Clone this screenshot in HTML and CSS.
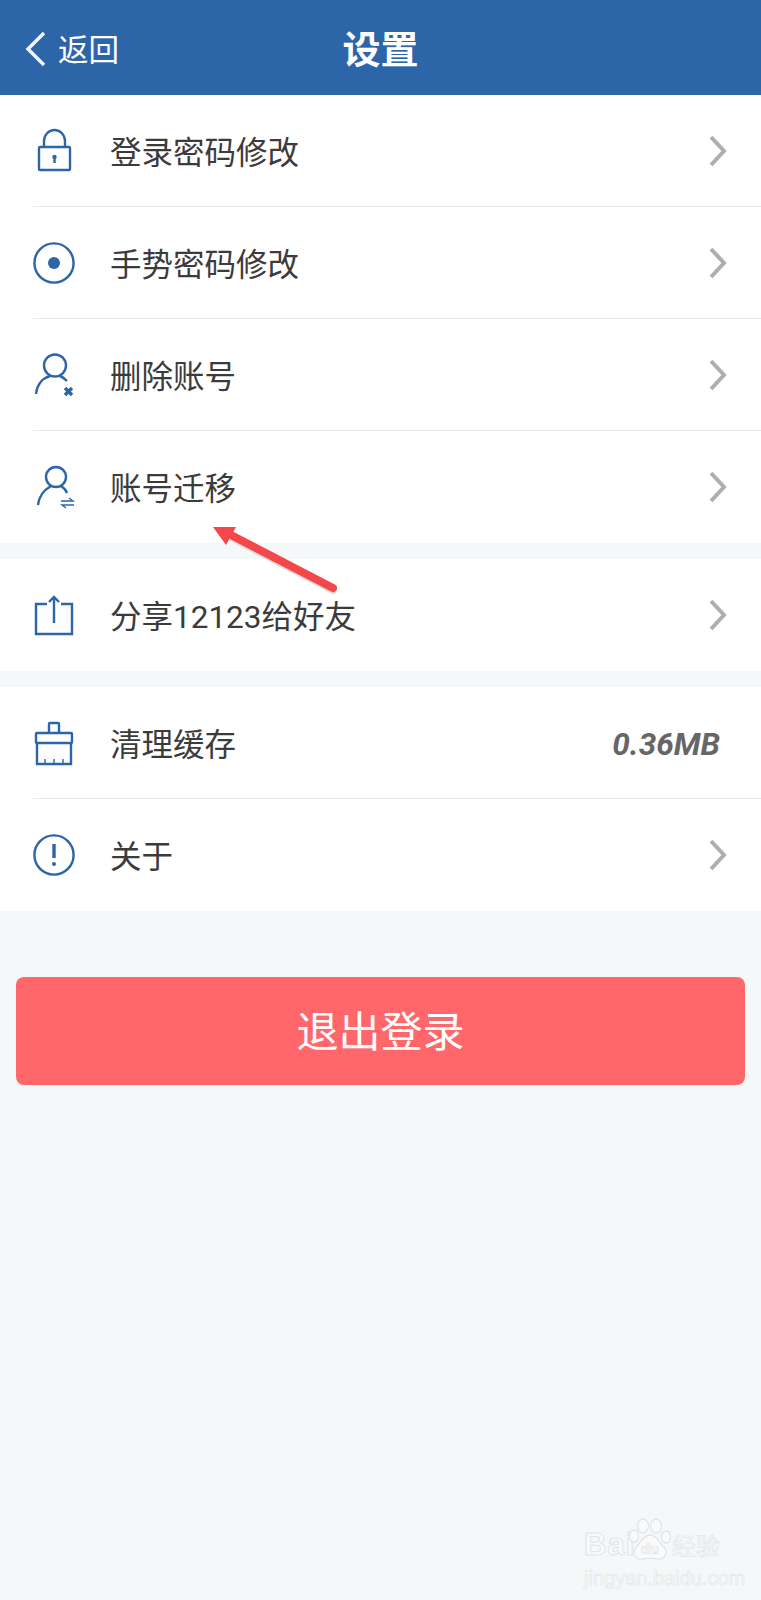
FILE: index.html
```html
<!DOCTYPE html>
<html>
<head>
    <meta http-equiv="Content-Type" content="text/html; charset=UTF-8">
    <title>设置</title>
    <link rel="stylesheet" href="styles.css">
</head>
<body>
<div class="page">
    <div class="topbar">
        <a class="back" href="#">
            <svg class="back-icon" width="24" height="38" viewBox="0 0 24 38"><path d="M21 3 L5 19 L21 35"/></svg>
            <span>返回</span>
        </a>
        <div class="title">设置</div>
    </div>

    <ul class="group">
        <li class="row">
            <svg class="ico" viewBox="0 0 48 48"><rect x="9" y="20" width="31" height="23" rx="1"/><path d="M14 20 V14 A10.5 11 0 0 1 35 14 V20"/><circle class="solid" cx="24.5" cy="30" r="2.2"/><path d="M24.5 30 V36"/></svg>
            <span class="label">登录密码修改</span>
            <svg class="arrow" viewBox="0 0 20 34"><path d="M3 3 L16 17 L3 31"/></svg>
        </li>
        <li class="row">
            <svg class="ico" viewBox="0 0 48 48"><circle cx="24" cy="24" r="19.6"/><circle class="solid" cx="24" cy="24" r="6"/></svg>
            <span class="label">手势密码修改</span>
            <svg class="arrow" viewBox="0 0 20 34"><path d="M3 3 L16 17 L3 31"/></svg>
        </li>
        <li class="row">
            <svg class="ico" viewBox="0 0 48 48"><circle cx="25" cy="14.5" r="11"/><path d="M6 43 C7 33 13 27 20 25 M30 25 C33 26 35 28 37 30"/><path class="thick" d="M35 37 L42 44 M42 37 L35 44"/></svg>
            <span class="label">删除账号</span>
            <svg class="arrow" viewBox="0 0 20 34"><path d="M3 3 L16 17 L3 31"/></svg>
        </li>
        <li class="row">
            <svg class="ico" viewBox="0 0 48 48"><circle cx="26" cy="14" r="10"/><path d="M8 42 C9 33 14 27 21 23 M31 23 C34 25 36 27 37 30"/><path class="thin" d="M31 38 H43 L39 35 M44 42 H32 L36 45"/></svg>
            <span class="label">账号迁移</span>
            <svg class="arrow" viewBox="0 0 20 34"><path d="M3 3 L16 17 L3 31"/></svg>
        </li>
    </ul>

    <ul class="group">
        <li class="row">
            <svg class="ico" viewBox="0 0 48 48"><path d="M17 13 H6 V43 H42 V13 H31"/><path d="M24 32 V7 M19 11 L24 6 L29 11"/></svg>
            <span class="label">分享12123给好友</span>
            <svg class="arrow" viewBox="0 0 20 34"><path d="M3 3 L16 17 L3 31"/></svg>
        </li>
    </ul>

    <ul class="group">
        <li class="row">
            <svg class="ico" viewBox="0 0 48 48"><path d="M19 14 V5 Q19 4 20 4 H28 Q29 4 29 5 V14"/><rect x="6" y="14" width="36" height="10" rx="1"/><path d="M7 24 V45 H41 V24"/><path class="thin" d="M15 45 V40 M24 45 V40 M33 45 V40"/></svg>
            <span class="label">清理缓存</span>
            <span class="value">0.36MB</span>
        </li>
        <li class="row">
            <svg class="ico" viewBox="0 0 48 48"><circle cx="24" cy="24" r="19.6"/><path class="thick" d="M24 13 V27"/><circle class="solid" cx="24" cy="33" r="2"/></svg>
            <span class="label">关于</span>
            <svg class="arrow" viewBox="0 0 20 34"><path d="M3 3 L16 17 L3 31"/></svg>
        </li>
    </ul>

    <a class="logout" href="#">退出登录</a>

    <!-- 红色箭头标注 -->
    <svg class="callout" width="140" height="80" viewBox="0 0 140 80">
        <path class="callout-shadow" d="M126 65 L24 12"/>
        <path class="callout-line" d="M126 63 L24 10"/>
        <path class="callout-head" d="M6 2 L29 2 L19 20 Z"/>
    </svg>

    <!-- 水印 -->
    <div class="mark">
        <div class="mark-top">
            <span class="mark-bai">Bai</span>
            <svg class="mark-paw" width="42" height="44" viewBox="0 0 42 44">
                <ellipse cx="14" cy="8" rx="5.5" ry="7"/>
                <ellipse cx="27" cy="8" rx="5.5" ry="7"/>
                <ellipse cx="5" cy="18" rx="4.5" ry="6"/>
                <ellipse cx="37" cy="19" rx="4.5" ry="6"/>
                <path d="M21 17 C28 17 30 25 35 29 C40 35 35 42 28 41 C24 40 18 40 14 41 C7 42 2 36 7 29 C12 25 14 17 21 17 Z"/>
                <text class="mark-du" x="21" y="36" text-anchor="middle">du</text>
            </svg>
            <span class="mark-jy">经验</span>
        </div>
        <div class="mark-url">jingyan.baidu.com</div>
    </div>
</div>
</body>
</html>
```

FILE: styles.css
```css
body{margin:0; background:#f5f8f9; font-family:"Roboto","Noto Sans CJK SC",sans-serif;}
ul{margin:0; padding:0; list-style:none;}
a{text-decoration:none;}
.page{position:relative; width:761px; height:1600px; overflow:hidden;}

.topbar{position:relative; display:flex; align-items:center; justify-content:center; height:95px; background:#2c65a8;}
.back{position:absolute; left:23px; top:32px; display:flex; align-items:center; gap:11px; color:#fff; font-size:30.5px; line-height:38px;}
.back-icon{fill:none; stroke:#f1f5f9; stroke-width:3.5; margin-top:-4px;}
.title{color:#fff; font-size:38px; font-weight:700; line-height:95px; margin-top:6px;}

.group{background:#fff; margin-bottom:16px;}
.row{display:flex; align-items:center; height:111px; margin-left:33px; padding-right:33px; border-bottom:1px solid #e9eaeb; color:#333;}
.row:last-child{border-bottom:0; height:112px;}
.ico{width:48px; height:48px; margin-left:-3px; flex:none; fill:none; stroke:#2c65a8; stroke-width:2.4;}
.ico .solid{fill:#2c65a8; stroke:none;}
.ico .thick{stroke-width:3.4;}
.ico .thin{stroke-width:1.4;}
.label{margin-left:32px; padding-bottom:2px; font-size:31.5px; color:#3b3b3b; flex:1;}
.arrow{width:20px; height:34px; fill:none; stroke:#aeaeae; stroke-width:4;}
.value{margin-right:8px; padding-top:3px; font-size:31.5px; font-weight:700; font-style:italic; color:#666;}

.logout{display:block; margin:66px 16px 0; height:108px; line-height:111px; background:#ff676a; border-radius:8px; color:#fff; font-size:42px; text-align:center;}

.callout{position:absolute; left:207px; top:525px;}
.callout-line{fill:none; stroke:#f4474a; stroke-width:8; stroke-linecap:round;}
.callout-shadow{fill:none; stroke:#d9d9d9; stroke-width:8; stroke-linecap:round;}
.callout-head{fill:#f4474a;}

.mark{position:absolute; left:584px; top:1518px; width:140px; color:#f8fafb;}
.mark-top{position:relative; height:44px;}
.mark-bai{position:absolute; left:0; top:10px; font-family:"Liberation Sans",sans-serif; font-size:31px; line-height:34px; font-weight:700; letter-spacing:1px; -webkit-text-stroke:1px #e2e5e7;}
.mark-paw{position:absolute; left:45px; top:0; fill:#f8fafb; stroke:#e2e5e7; stroke-width:1.3;}
.mark-du{font-family:"Liberation Sans",sans-serif; font-size:15px; font-weight:700; stroke-width:0.7;}
.mark-jy{position:absolute; left:88px; top:15px; font-size:24px; line-height:28px; -webkit-text-stroke:0.7px #e2e5e7;}
.mark-url{margin-top:5px; font-family:"Liberation Sans",sans-serif; font-size:20px; line-height:22px; white-space:nowrap; -webkit-text-stroke:0.7px #e4e7e9;}
```
